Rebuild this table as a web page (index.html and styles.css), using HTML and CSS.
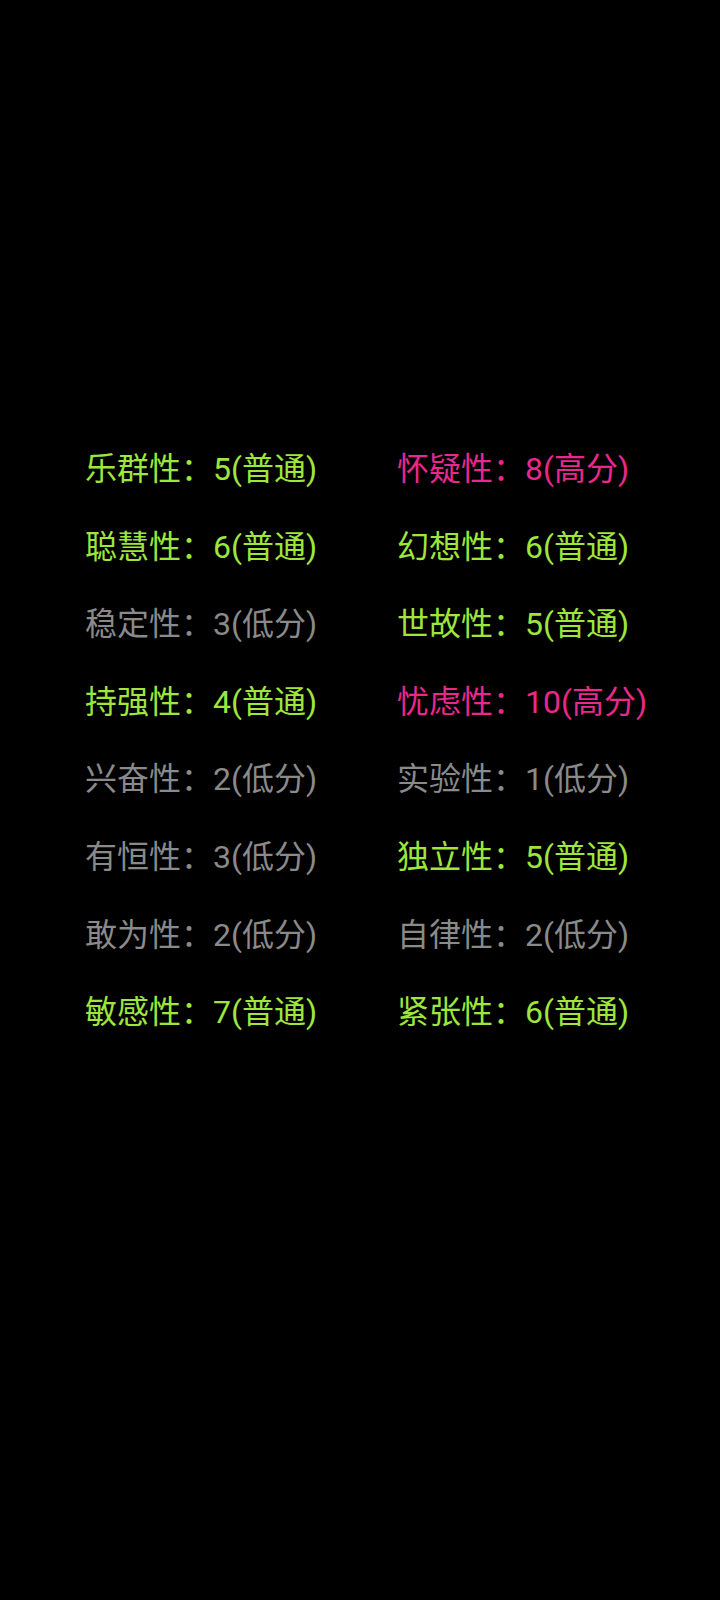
FILE: index.html
```html
<!DOCTYPE html>
<html lang="zh-CN">
<head>
<meta charset="utf-8">
<link rel="stylesheet" href="styles.css">
</head>
<body>
<div class="grid">
  <div class="item mid">乐群性：5(普通)</div>
  <div class="item high">怀疑性：8(高分)</div>
  <div class="item mid">聪慧性：6(普通)</div>
  <div class="item mid">幻想性：6(普通)</div>
  <div class="item low">稳定性：3(低分)</div>
  <div class="item mid">世故性：5(普通)</div>
  <div class="item mid">持强性：4(普通)</div>
  <div class="item high">忧虑性：10(高分)</div>
  <div class="item low">兴奋性：2(低分)</div>
  <div class="item low">实验性：1(低分)</div>
  <div class="item low">有恒性：3(低分)</div>
  <div class="item mid">独立性：5(普通)</div>
  <div class="item low">敢为性：2(低分)</div>
  <div class="item low">自律性：2(低分)</div>
  <div class="item mid">敏感性：7(普通)</div>
  <div class="item mid">紧张性：6(普通)</div>
</div>
</body>
</html>
```

FILE: styles.css
```css
html, body {
  margin: 0;
  padding: 0;
  background: #000;
}
body {
  width: 720px;
  height: 1600px;
  font-family: Roboto, "Noto Sans CJK SC", sans-serif;
}
.grid {
  display: grid;
  grid-template-columns: 312px 312px;
  grid-auto-rows: 77.6px;
  padding-top: 431px;
  padding-left: 85px;
}
.item {
  font-size: 32px;
  line-height: 77.6px;
  white-space: nowrap;
}
.mid { color: #9ee63c; }
.high { color: #e8288c; }
.low { color: #8a8a8a; }
```
